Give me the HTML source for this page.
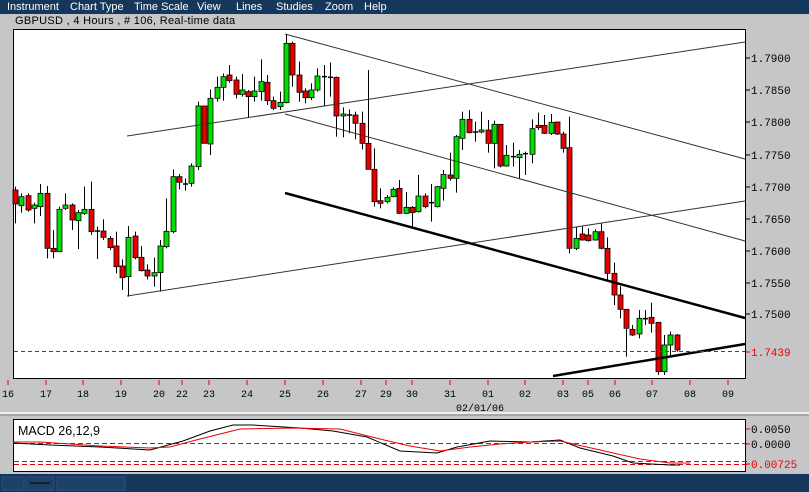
<!DOCTYPE html>
<html><head><meta charset="utf-8"><style>
html,body{margin:0;padding:0;}
body{width:809px;height:492px;overflow:hidden;background:#c6c6c8;position:relative;font-family:"Liberation Sans",sans-serif;}
#menu{position:absolute;left:0;top:0;width:809px;height:14px;background:#15375c;color:#fff;font-size:11px;line-height:14px;}
#menu span{position:absolute;top:0;}
#title{position:absolute;left:15px;top:14px;font-size:11px;line-height:14px;color:#000;letter-spacing:0.3px;}
#status{position:absolute;left:0;top:474px;width:809px;height:18px;background:#15375c;}
svg{position:absolute;left:0;top:0;}
</style></head><body>
<div id="menu"><span style="left:7px">Instrument</span><span style="left:70px">Chart Type</span><span style="left:134px">Time Scale</span><span style="left:197px">View</span><span style="left:236px">Lines</span><span style="left:276px">Studies</span><span style="left:325px">Zoom</span><span style="left:364px">Help</span></div>
<div id="title">GBPUSD , 4 Hours , # 106, Real-time data</div>
<div id="status"></div>
<svg id="s" width="809" height="492" xmlns="http://www.w3.org/2000/svg" font-family="Liberation Mono, monospace" font-size="11">
<rect x="13.5" y="29.5" width="732" height="349" fill="#fff" stroke="#000"/>
<rect x="13.5" y="419.5" width="732" height="52" fill="#fff" stroke="#000"/>
<line x1="0" y1="413" x2="809" y2="413" stroke="#eee" stroke-width="2"/>
<line x1="0" y1="415" x2="809" y2="415" stroke="#888" stroke-width="1"/>
<g id="cd"></g>
<g stroke="#333" stroke-width="1" fill="none">
<line x1="127" y1="136" x2="745" y2="42"/>
<line x1="127" y1="296" x2="745" y2="201"/>
<line x1="285" y1="34" x2="745" y2="159"/>
<line x1="285" y1="114" x2="745" y2="241"/>
</g>
<g stroke="#000" stroke-width="2.5">
<line x1="285" y1="193" x2="745" y2="318"/>
<line x1="553" y1="376" x2="745" y2="344"/>
</g>
<line x1="14" y1="351.5" x2="745" y2="351.5" stroke="#e00" stroke-dasharray="4,3"/>
<g fill="#000" font-size="11">
<text x="751" y="62">1.7900</text><text x="751" y="94">1.7850</text><text x="751" y="126">1.7800</text><text x="751" y="159">1.7750</text><text x="751" y="191">1.7700</text><text x="751" y="223">1.7650</text><text x="751" y="255">1.7600</text><text x="751" y="287">1.7550</text><text x="751" y="318">1.7500</text>
<text x="751" y="356" fill="#e00">1.7439</text>
</g>
<g stroke="#000"><line x1="746" y1="58" x2="750" y2="58"/><line x1="746" y1="90" x2="750" y2="90"/><line x1="746" y1="122" x2="750" y2="122"/><line x1="746" y1="155" x2="750" y2="155"/><line x1="746" y1="187" x2="750" y2="187"/><line x1="746" y1="219" x2="750" y2="219"/><line x1="746" y1="251" x2="750" y2="251"/><line x1="746" y1="283" x2="750" y2="283"/><line x1="746" y1="314" x2="750" y2="314"/></g>
<line x1="746" y1="352" x2="750" y2="352" stroke="#e00"/>
<g id="dt" fill="#000" font-size="10" text-anchor="middle"></g>
<text x="480" y="411" font-size="10" text-anchor="middle">02/01/06</text>
<text x="18" y="435" font-family="Liberation Sans, sans-serif" font-size="12.5">MACD 26,12,9</text>
<g stroke="#e00" stroke-dasharray="5,3"><line x1="14" y1="443.5" x2="750" y2="443.5"/><line x1="14" y1="461.5" x2="750" y2="461.5"/><line x1="14" y1="464.5" x2="750" y2="464.5"/></g>
<polyline fill="none" stroke="#000" points="13,443 50,445 100,447 150,450 183,441 210,431 233,425 253,425 300,428 333,431 367,437 400,451 437,453 457,447 490,441 530,442 560,440 580,448 613,456 633,463 670,465 680,465"/>
<polyline fill="none" stroke="#e00" points="13,442 40,442 100,446 150,448 170,447 200,439 240,429 290,428 340,429 380,439 410,446 440,451 470,447 500,444 530,442 560,441 600,450 640,459 670,463 690,463"/>
<g font-size="11"><text x="751" y="433">0.0050</text><text x="751" y="448">0.0000</text><text x="751" y="468" fill="#e00">0.00725</text></g>
<g stroke="#e00"><line x1="746" y1="429" x2="750" y2="429"/><line x1="746" y1="444" x2="750" y2="444"/><line x1="746" y1="464" x2="750" y2="464"/></g>
<rect x="2" y="477" width="22" height="13" fill="#1c4068" stroke="#2a5080"/>
<rect x="26" y="477" width="28" height="13" fill="#1c4068" stroke="#2a5080"/>
<rect x="57" y="477" width="68" height="13" fill="#1c4068" stroke="#2a5080"/>
<line x1="30" y1="483" x2="50" y2="483" stroke="#000"/>
</svg>
<script>
var C=[['r',480,522,470,580],['g',500,527,490,548],['r',497,540,490,545],['g',525,535,518,580],['g',490,530,462,558],['r',490,655,468,685],['r',655,665,600,685],['g',538,665,530,665],['g',525,535,490,540],['r',525,570,520,600],['g',548,572,540,657],['g',538,550,470,555],['r',538,605,455,615],['f',603,603,590,687],['r',603,622,568,630],['r',625,653,618,660],['r',648,710,605,730],['r',708,743,688,780],['g',622,740,588,800],['r',618,683,605,688],['r',682,722,648,725],['r',720,738,703,748],['g',728,738,683,770],['g',648,728,630,785],['g',604,650,505,655],['g',440,605,418,610],['r',440,457,432,478],['f',462,462,445,482],['g',408,460,400,470],['g',228,410,215,420],['r',228,340,228,340],['g',205,342,178,375],['g',172,205,140,215],['g',140,172,130,212],['r',135,152,105,158],['r',150,193,140,205],['g',180,193,132,200],['r',185,200,180,262],['g',183,200,140,215],['g',155,185,88,212],['r',157,212,135,225],['r',212,235,200,240],['g',217,230,185,240],['g',40,218,12,220],['r',40,135,35,170],['r',135,187,95,215],['r',183,203,175,220],['g',180,203,160,210],['g',138,180,115,185],['f',140,140,105,228],['f',142,142,97,200],['r',142,258,140,320],['g',252,258,232,322],['f',255,255,238,310],['r',255,280,245,328],['r',280,340,245,358],['r',340,418,120,418],['r',418,515,355,530],['r',512,520,475,535],['g',502,515,495,520],['g',478,500,472,502],['r',475,550,450,552],['g',532,550,486,552],['r',532,548,528,590],['g',498,545,435,548],['r',498,530,490,535],['f',518,518,462,575],['g',470,530,468,532],['g',433,475,420,512],['r',435,445,368,452],['g',320,445,315,488],['g',268,325,245,360],['r',268,308,240,310],['f',306,306,275,335],['g',300,306,245,310],['r',300,340,270,368],['g',283,340,272,415],['r',283,408,283,412],['g',376,408,345,410],['f',380,380,338,410],['g',373,383,360,445],['f',371,371,365,435],['g',296,373,268,400],['r',286,293,248,300],['r',286,310,255,312],['g',277,310,252,315],['r',276,312,275,315],['r',312,355,305,368],['r',353,655,260,670],['g',625,655,592,660],['r',612,630,590,632],['r',615,632,595,635],['g',605,630,598,632],['r',605,655,578,658],['r',655,730,622,752],['r',730,795,698,825],['r',795,838,768,865],['r',838,895,838,980],['r',898,915,885,918],['g',865,912,840,925],['f',866,866,840,885],['r',862,880,818,908],['r',877,1025,877,1035],['g',945,1025,915,1035],['g',915,945,905,978],['r',915,960,912,965]];
var h='';
C.forEach(function(c,i){var x=Math.round(15+6.3*i)+0.5;var y=function(v){return 30+v/3;};
h+='<line x1="'+x+'" y1="'+y(c[3])+'" x2="'+x+'" y2="'+y(c[4])+'" stroke="#000"/>';
if(c[0]=='f'){h+='<line x1="'+(x-2.5)+'" y1="'+y(c[1])+'" x2="'+(x+2.5)+'" y2="'+y(c[1])+'" stroke="#000" stroke-width="1.5"/>';}
else{var t=y(c[1]),b=y(c[2]);if(b-t<2)b=t+2;h+='<rect x="'+(x-2.5)+'" y="'+t+'" width="5" height="'+(b-t)+'" fill="'+(c[0]=='r'?'#e80000':'#00e000')+'" stroke="#000" stroke-width="0.8"/>';}});
document.getElementById('cd').innerHTML=h;
var D=[['16',8],['17',46],['18',83],['19',121],['20',159],['22',182],['23',209],['24',247],['25',285],['26',323],['27',361],['29',386],['30',412],['31',450],['01',488],['02',525],['03',563],['05',588],['06',615],['07',652],['08',690],['09',728]];
var d='';D.forEach(function(e){d+='<text x="'+e[1]+'" y="397">'+e[0]+'</text><line x1="'+e[1]+'" y1="380" x2="'+e[1]+'" y2="385" stroke="#e00"/>';});
document.getElementById('dt').innerHTML=d;
</script>
</body></html>
